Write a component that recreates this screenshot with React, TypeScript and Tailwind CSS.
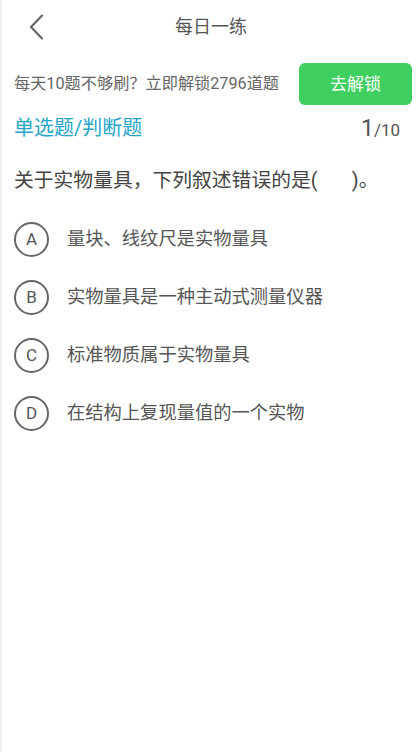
import React from 'react';

const options = [
  { key: 'A', text: '量块、线纹尺是实物量具' },
  { key: 'B', text: '实物量具是一种主动式测量仪器' },
  { key: 'C', text: '标准物质属于实物量具' },
  { key: 'D', text: '在结构上复现量值的一个实物' },
];

export default function App() {
  return (
    <div
      className="w-[420px] h-[752px] bg-white border-l-2 border-[#efefef] overflow-hidden"
      style={{ fontFamily: 'Roboto, "Noto Sans CJK SC", sans-serif' }}
    >
      {/* header */}
      <div className="h-[54px] flex items-center">
        <div className="w-[80px] pl-[27px] flex items-center">
          <svg width="16" height="26" viewBox="0 0 16 26" fill="none">
            <path d="M13 1.5 L2 13 L13 24.5" stroke="#666" strokeWidth="2.2" strokeLinecap="round" strokeLinejoin="round" />
          </svg>
        </div>
        <h1 className="flex-1 text-center text-[18px] text-[#555] leading-none">每日一练</h1>
        <div className="w-[80px]" />
      </div>

      {/* unlock banner */}
      <div className="mt-[9px] flex items-center justify-between pl-[12px] pr-[8px]">
        <p className="text-[16.2px] text-[#666] leading-none">每天10题不够刷？立即解锁2796道题</p>
        <button className="w-[113px] h-[42px] rounded-[6px] bg-[#3fcf5f] text-white text-[17px] leading-none">
          去解锁
        </button>
      </div>

      {/* type + progress */}
      <div className="mt-[8px] h-[30px] flex items-center justify-between pl-[12px] pr-[20px]">
        <span className="text-[20px] text-[#23a5c9] leading-none">单选题/判断题</span>
        <span className="text-[#555] leading-none">
          <span className="text-[23px]">1</span>
          <span className="text-[17px]">/10</span>
        </span>
      </div>

      {/* question */}
      <p className="mt-[24px] pl-[12px] text-[19.8px] text-[#444] leading-[28px]">
        关于实物量具，下列叙述错误的是(&nbsp;&nbsp;&nbsp;&nbsp;&nbsp;&nbsp;&nbsp;)。
      </p>

      {/* options */}
      <div className="mt-[27px] pl-[12px] flex flex-col gap-[24px]">
        {options.map(o => (
          <div key={o.key} className="flex items-center h-[34px]">
            <span className="w-[35px] h-[35px] rounded-full border-2 border-[#666] flex items-center justify-center text-[17px] text-[#555] leading-none">
              {o.key}
            </span>
            <span className="ml-[18px] text-[18.3px] text-[#555] leading-none">{o.text}</span>
          </div>
        ))}
      </div>
    </div>
  );
}
